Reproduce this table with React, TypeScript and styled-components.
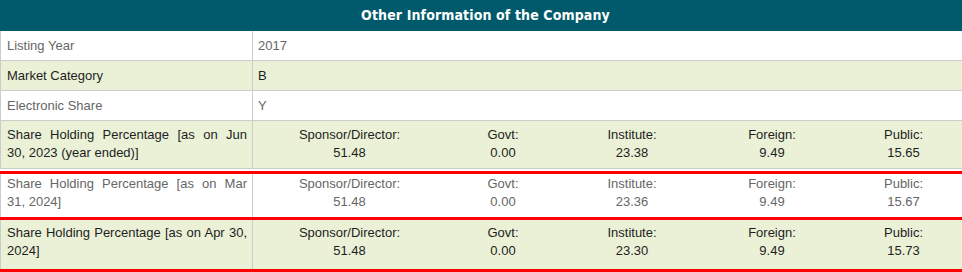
import React from 'react'
import styled, { createGlobalStyle } from 'styled-components'

const GlobalStyle = createGlobalStyle`
    body{
        margin: 0;
        background: #ffffff;
        font-family: "Liberation Sans", Arial, sans-serif;
    }
`

const colors = {
    teal: '#005a6b',
    green: '#eaf1d6',
    border: '#cccccc',
    red: '#ff0000',
    dark: '#1e1e1e',
    muted: '#666666',
}

type Holding = { label: string, value: string }

const shareRows = [
    {
        lines: ['Share Holding Percentage [as on Jun', '30, 2023 (year ended)]'],
        green: true,
        pad: '5px 0 6px 0',
        values: ['51.48', '0.00', '23.38', '9.49', '15.65'],
    },
    {
        lines: ['Share Holding Percentage [as on Mar', '31, 2024]'],
        green: false,
        pad: '1px 0 6px 0',
        redTop: true,
        redBottom: true,
        gap: true,
        values: ['51.48', '0.00', '23.36', '9.49', '15.67'],
    },
    {
        lines: ['Share Holding Percentage [as on Apr 30,', '2024]'],
        green: true,
        pad: '4px 0 9px 0',
        redBottom: true,
        values: ['51.48', '0.00', '23.30', '9.49', '15.73'],
    },
]

const holdingNames = ['Sponsor/Director:', 'Govt:', 'Institute:', 'Foreign:', 'Public:']

const App = () => {
    return(
        <>
            <GlobalStyle/>
            <Table>
                <Header>Other Information of the Company</Header>
                <Row>
                    <Label>Listing Year</Label>
                    <Value>2017</Value>
                </Row>
                <Row $green>
                    <Label>Market Category</Label>
                    <Value>B</Value>
                </Row>
                <Row>
                    <Label>Electronic Share</Label>
                    <Value>Y</Value>
                </Row>
                {
                    shareRows.map((row, index) => {
                        const holdings: Holding[] = holdingNames.map((label, i) => ({label, value: row.values[i]}))
                        return(
                            <Row
                                key={`share-row-${index}`}
                                $green={row.green}
                                $redTop={row.redTop}
                                $redBottom={row.redBottom}
                                $gap={row.gap}
                            >
                                <LabelBlock $pad={row.pad}>
                                    <Line $justify>{row.lines[0]}</Line>
                                    <Line>{row.lines[1]}</Line>
                                </LabelBlock>
                                <Holdings $pad={row.pad}>
                                    {
                                        holdings.map((h) => (
                                            <HoldingCell key={h.label}>
                                                <Line>{h.label}</Line>
                                                <Line>{h.value}</Line>
                                            </HoldingCell>
                                        ))
                                    }
                                </Holdings>
                            </Row>
                        )
                    })
                }
            </Table>
        </>
    )
}

const Table = styled.div`
    width: 962px;
    font-size: 13px;
`

const Header = styled.div`
    height: 31px;
    line-height: 31px;
    padding-left: 9px;
    background: ${colors.teal};
    color: #ffffff;
    text-align: center;
    font-family: "DejaVu Sans Condensed", "DejaVu Sans", sans-serif;
    font-weight: 700;
    font-size: 14px;
    letter-spacing: 0.12px;
`

const Row = styled.div<{ $green?: boolean, $redTop?: boolean, $redBottom?: boolean, $gap?: boolean }>`
    display: grid;
    grid-template-columns: 253px 1fr;
    background: ${p => p.$green ? colors.green : '#ffffff'};
    color: ${p => p.$green ? colors.dark : colors.muted};
    border-top: ${p => p.$redTop ? `3px solid ${colors.red}` : 'none'};
    border-bottom: ${p => p.$redBottom ? `3px solid ${colors.red}` : `1px solid ${colors.border}`};
    margin-top: ${p => p.$gap ? '2px' : '0'};
`

const Label = styled.div`
    box-sizing: border-box;
    border-left: 1px solid ${colors.border};
    border-right: 1px solid ${colors.border};
    padding: 0 5px 0 6px;
    line-height: 29px;
`

const Value = styled.div`
    padding: 0 0 0 5px;
    line-height: 29px;
`

const LabelBlock = styled(Label)<{ $pad: string }>`
    line-height: 18px;
    padding: ${p => p.$pad};
    padding-left: 6px;
    padding-right: 5px;
`

const Line = styled.div<{ $justify?: boolean }>`
    line-height: 18px;
    white-space: nowrap;
    text-align: ${p => p.$justify ? 'justify' : 'inherit'};
    text-align-last: ${p => p.$justify ? 'justify' : 'auto'};
`

const Holdings = styled.div<{ $pad: string }>`
    display: grid;
    grid-template-columns: 183px 124px 134px 146px 1fr;
    padding: ${p => p.$pad};
    padding-left: 5px;
`

const HoldingCell = styled.div`
    text-align: center;
`

export default App
